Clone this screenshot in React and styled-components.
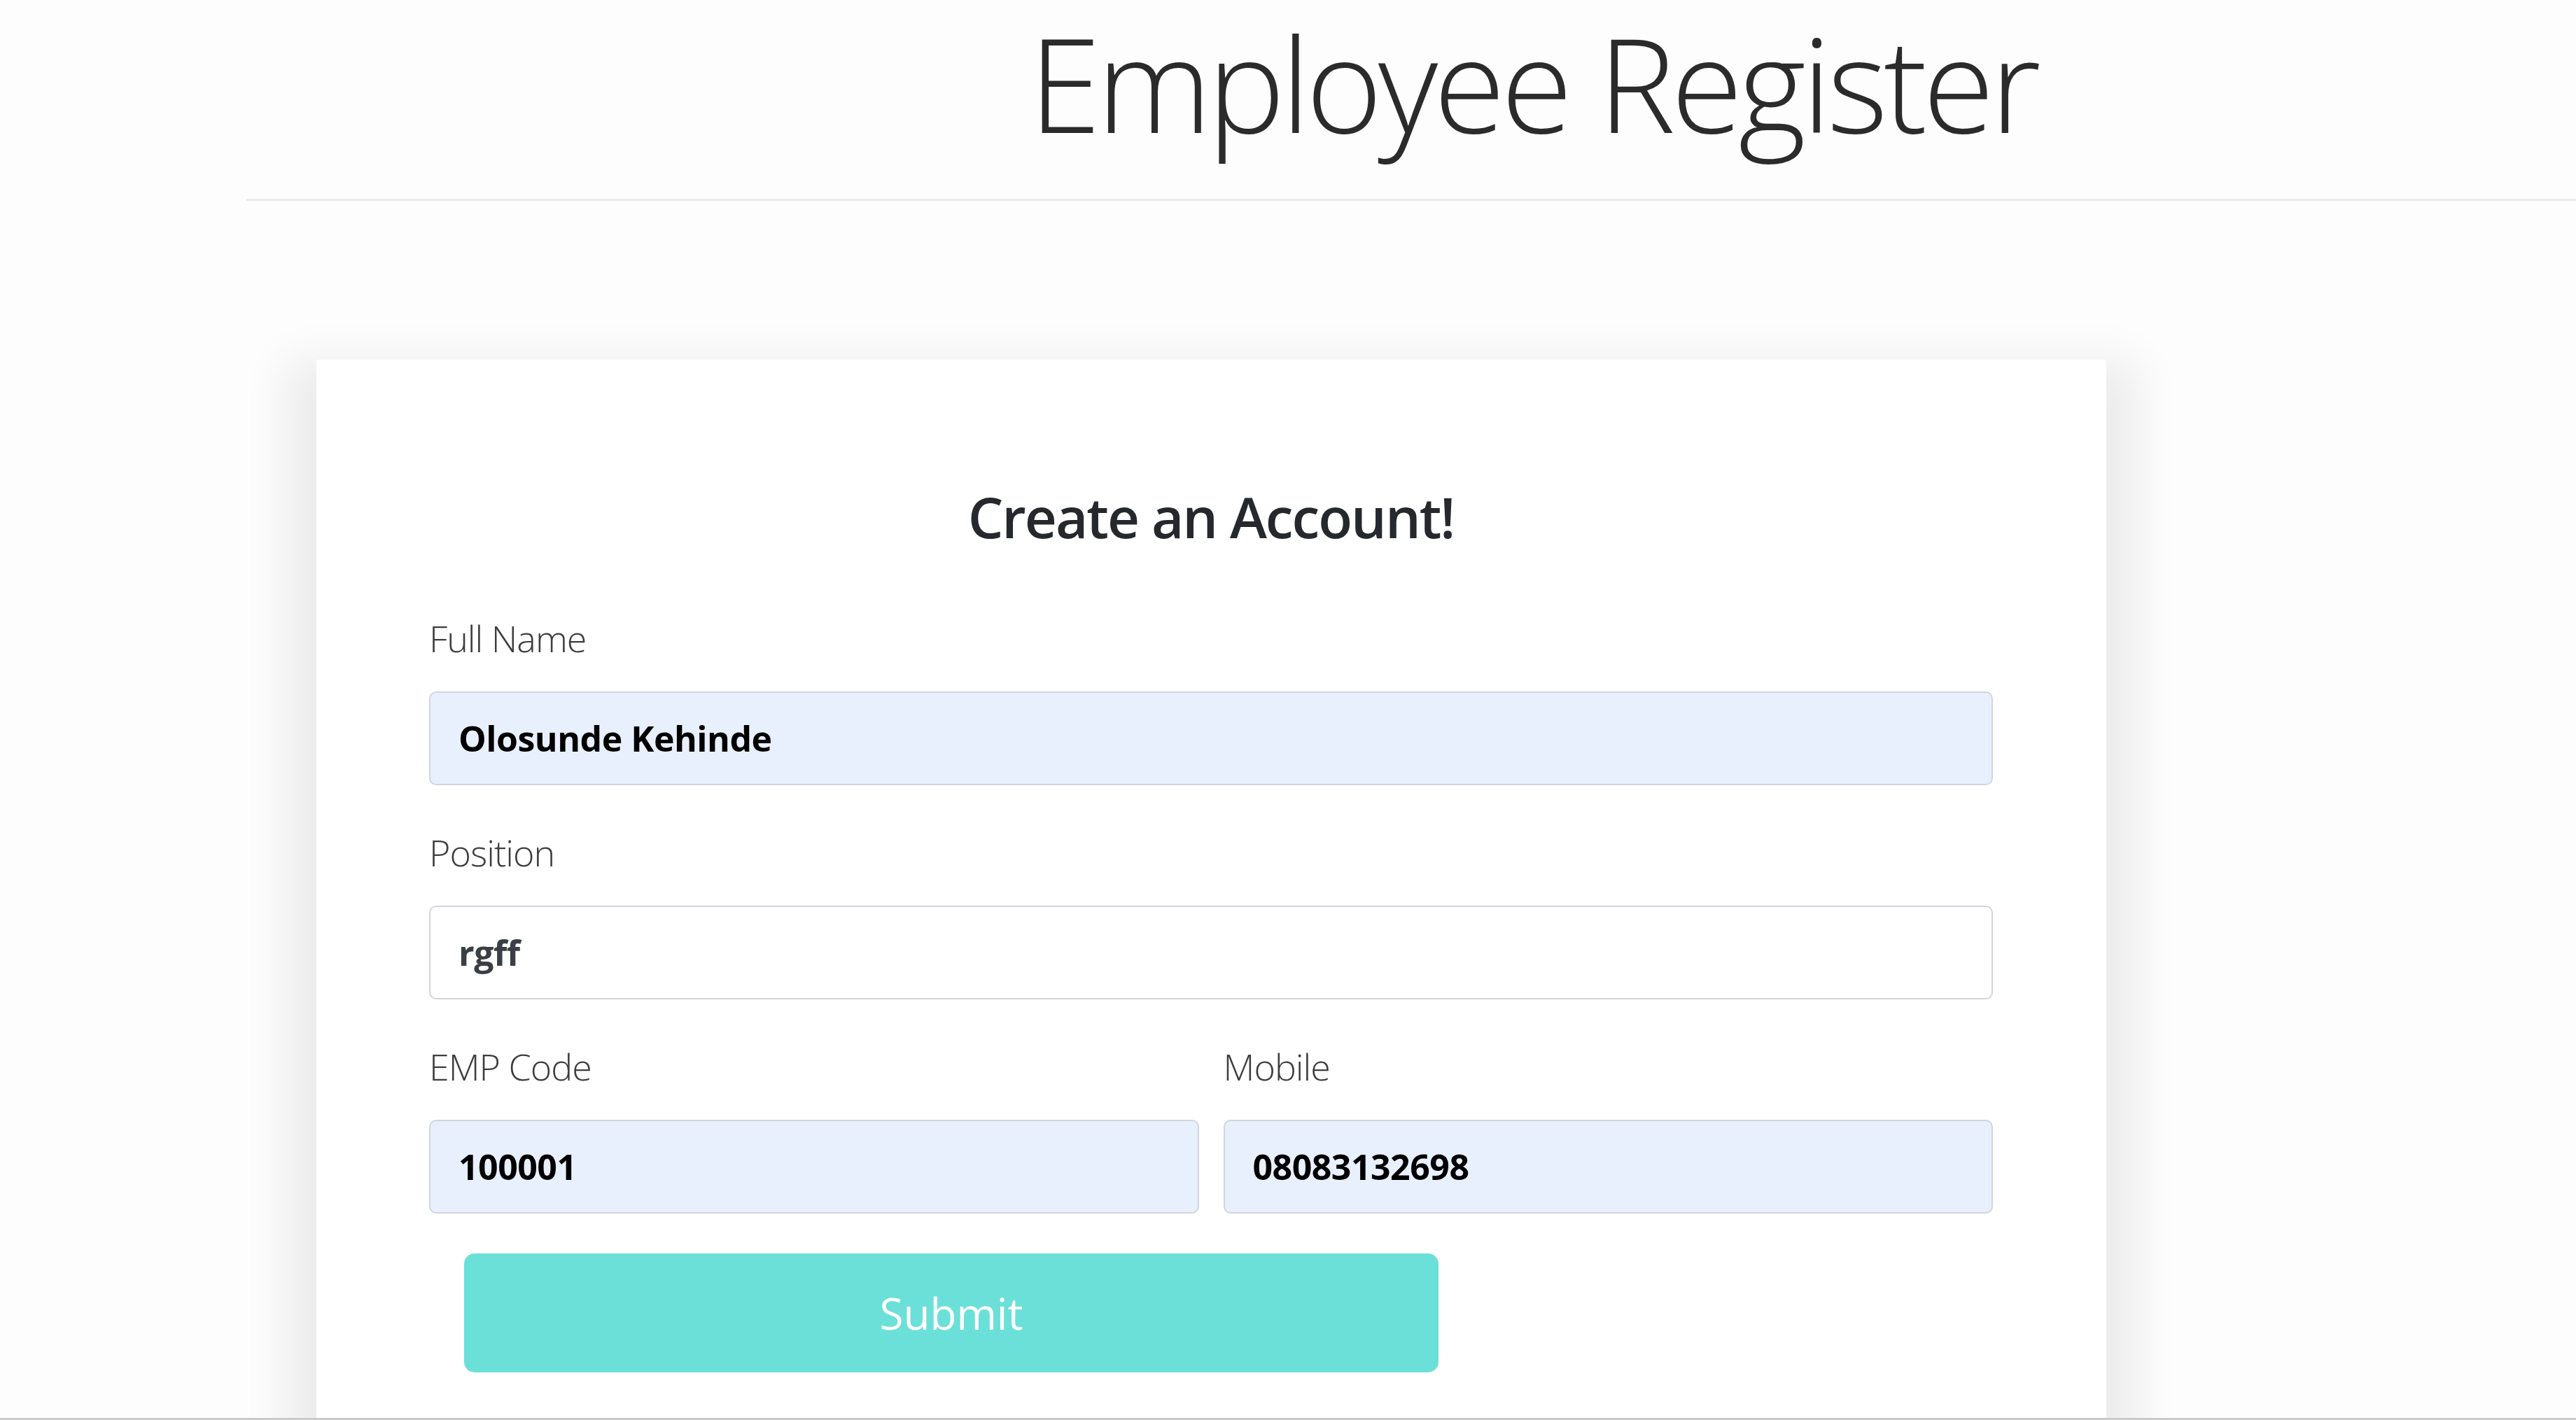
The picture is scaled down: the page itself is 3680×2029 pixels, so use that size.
import React from 'react'
import styled, { createGlobalStyle } from 'styled-components'

const GlobalStl = createGlobalStyle`
  * {
    box-sizing: border-box;
  }
  body {
    margin: 0;
    background: #fdfdfd;
    font-family: "Open Sans", "Noto Sans", sans-serif;
  }
`

const PageStl = styled.div`
  height: 100vh;
  overflow: hidden;
  padding-left: 352px;
  border-bottom: 3px solid #cacaca;
`

const HeaderStl = styled.header`
  padding: 2px 0 0 1118px;
  height: 287px;
  border-bottom: 3px solid #ebebeb;
`

const TitleStl = styled.h1`
  margin: 0;
  font-size: 186px;
  line-height: 1.25;
  font-weight: 300;
  letter-spacing: -6px;
  color: #2b2b2b;
  white-space: nowrap;
`

const CardStl = styled.div`
  margin: 227px 0 0 100px;
  width: 2557px;
  background: #fff;
  padding: 184px 162px 0 161px;
  min-height: 1600px;
  box-shadow: 0 45px 60px 45px rgba(0, 0, 0, 0.072);
`

const HeadingStl = styled.h2`
  margin: 0 0 108px;
  text-align: center;
  font-size: 80px;
  line-height: 1;
  font-weight: 600;
  letter-spacing: -2px;
  color: #25282c;
`

const GroupStl = styled.div`
  display: flex;
  flex-direction: column;
  margin-bottom: ${p => p.$last ? '0' : '70px'};
`

const RowStl = styled.div`
  display: grid;
  grid-template-columns: 1fr 1fr;
  column-gap: 35px;
`

const LabelStl = styled.label`
  font-size: 52px;
  line-height: 1;
  font-weight: 300;
  letter-spacing: -1px;
  color: #3d3d3d;
  margin-bottom: 50px;
`

const InputStl = styled.input`
  height: 134px;
  width: 100%;
  padding: 0 40px;
  border: 2px solid #d2d5dc;
  border-radius: 10px;
  background: ${p => p.$filled ? '#e8f0fe' : '#fff'};
  color: ${p => p.$filled ? '#000' : '#3a3f45'};
  font-family: "Open Sans", "Noto Sans", sans-serif;
  font-size: 50px;
  font-weight: 700;
  letter-spacing: -0.5px;
  outline: none;
`

const SubmitStl = styled.button`
  margin: 57px 0 0 50px;
  width: 1392px;
  height: 170px;
  border: none;
  border-radius: 15px;
  background: #6be0d8;
  color: #fff;
  font-family: "Open Sans", "Noto Sans", sans-serif;
  font-size: 62px;
  font-weight: 400;
`

const Field = ({label, value, filled, last}) => (
  <GroupStl $last={last}>
    <LabelStl>{label}</LabelStl>
    <InputStl value={value} readOnly $filled={filled} />
  </GroupStl>
)

export default function App() {
  return (
    <PageStl>
      <GlobalStl />
      <HeaderStl>
        <TitleStl>Employee Register</TitleStl>
      </HeaderStl>

      <CardStl>
        <HeadingStl>Create an Account!</HeadingStl>
        <Field label="Full Name" value="Olosunde Kehinde" filled />
        <Field label="Position" value="rgff" />
        <RowStl>
          <Field label="EMP Code" value="100001" filled last />
          <Field label="Mobile" value="08083132698" filled last />
        </RowStl>
        <SubmitStl type="button">Submit</SubmitStl>
      </CardStl>
    </PageStl>
  )
}
